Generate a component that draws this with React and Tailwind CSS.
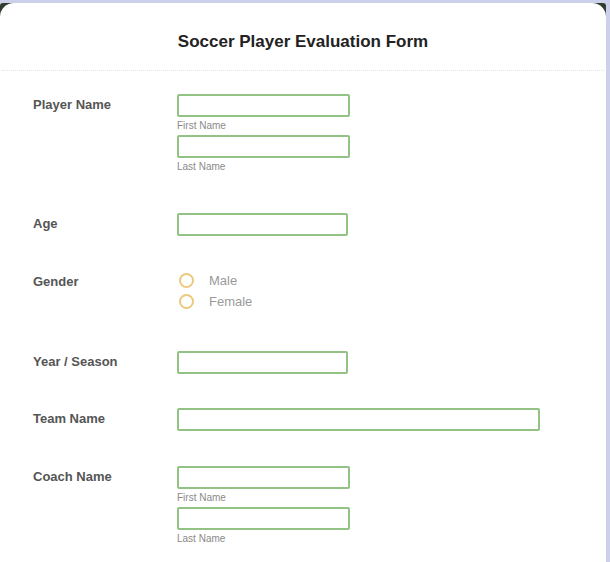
import React from 'react';

const labelCls = "w-[144px] shrink-0 text-[13px] font-bold text-[#555] leading-[22px]";
const inputCls = "block h-[23px] rounded-[2px] border-2 border-[#93c285] bg-white outline-none";

// Field with small helper text underneath (First Name / Last Name)
const SubField = ({ hint }) => (
  <div>
    <input className={`${inputCls} w-[173px]`} />
    <div className="text-[10px] leading-[18px] text-[#8a8a8a]">{hint}</div>
  </div>
);

const Row = ({ label, className = "", children }) => (
  <div className={`flex ${className}`}>
    <div className={labelCls}>{label}</div>
    <div className="flex-1">{children}</div>
  </div>
);

const Radio = ({ label }) => (
  <label className="flex items-center h-[21px] pl-[2px]">
    <span className="w-[15px] h-[15px] rounded-full border-2 border-[#ebc97f] bg-white" />
    <span className="ml-[15px] text-[13px] text-[#9a9a9a]">{label}</span>
  </label>
);

export default function App() {
  return (
    <div className="w-[610px] h-[562px] bg-[#cdd0ea] pt-[3px] pr-[4px] overflow-hidden" style={{ fontFamily: '"Liberation Sans", Arial, sans-serif' }}>
      <div className="h-full bg-[#2f3d2f] rounded-t-[3px]">
        <div className="h-full bg-white rounded-t-[14px]">
          {/* Header */}
          <div className="h-[68px] pt-[11px] flex items-center justify-center border-b border-dotted border-[#e2e2e2] mx-[2px]">
            <h1 className="text-[17px] font-bold text-[#222]">Soccer Player Evaluation Form</h1>
          </div>

          <div className="px-[33px]">
            <Row label="Player Name" className="mt-[23px]">
              <SubField hint="First Name" />
              <SubField hint="Last Name" />
            </Row>

            <Row label="Age" className="mt-[37px]">
              <input className={`${inputCls} w-[171px]`} />
            </Row>

            <Row label="Gender" className="mt-[35px]">
              <div className="-mt-[1px]">
                <Radio label="Male" />
                <Radio label="Female" />
              </div>
            </Row>

            <Row label="Year / Season" className="mt-[39px]">
              <input className={`${inputCls} w-[171px]`} />
            </Row>

            <Row label="Team Name" className="mt-[34px]">
              <input className={`${inputCls} w-[363px]`} />
            </Row>

            <Row label="Coach Name" className="mt-[35px]">
              <SubField hint="First Name" />
              <SubField hint="Last Name" />
            </Row>
          </div>
        </div>
      </div>
    </div>
  );
}
